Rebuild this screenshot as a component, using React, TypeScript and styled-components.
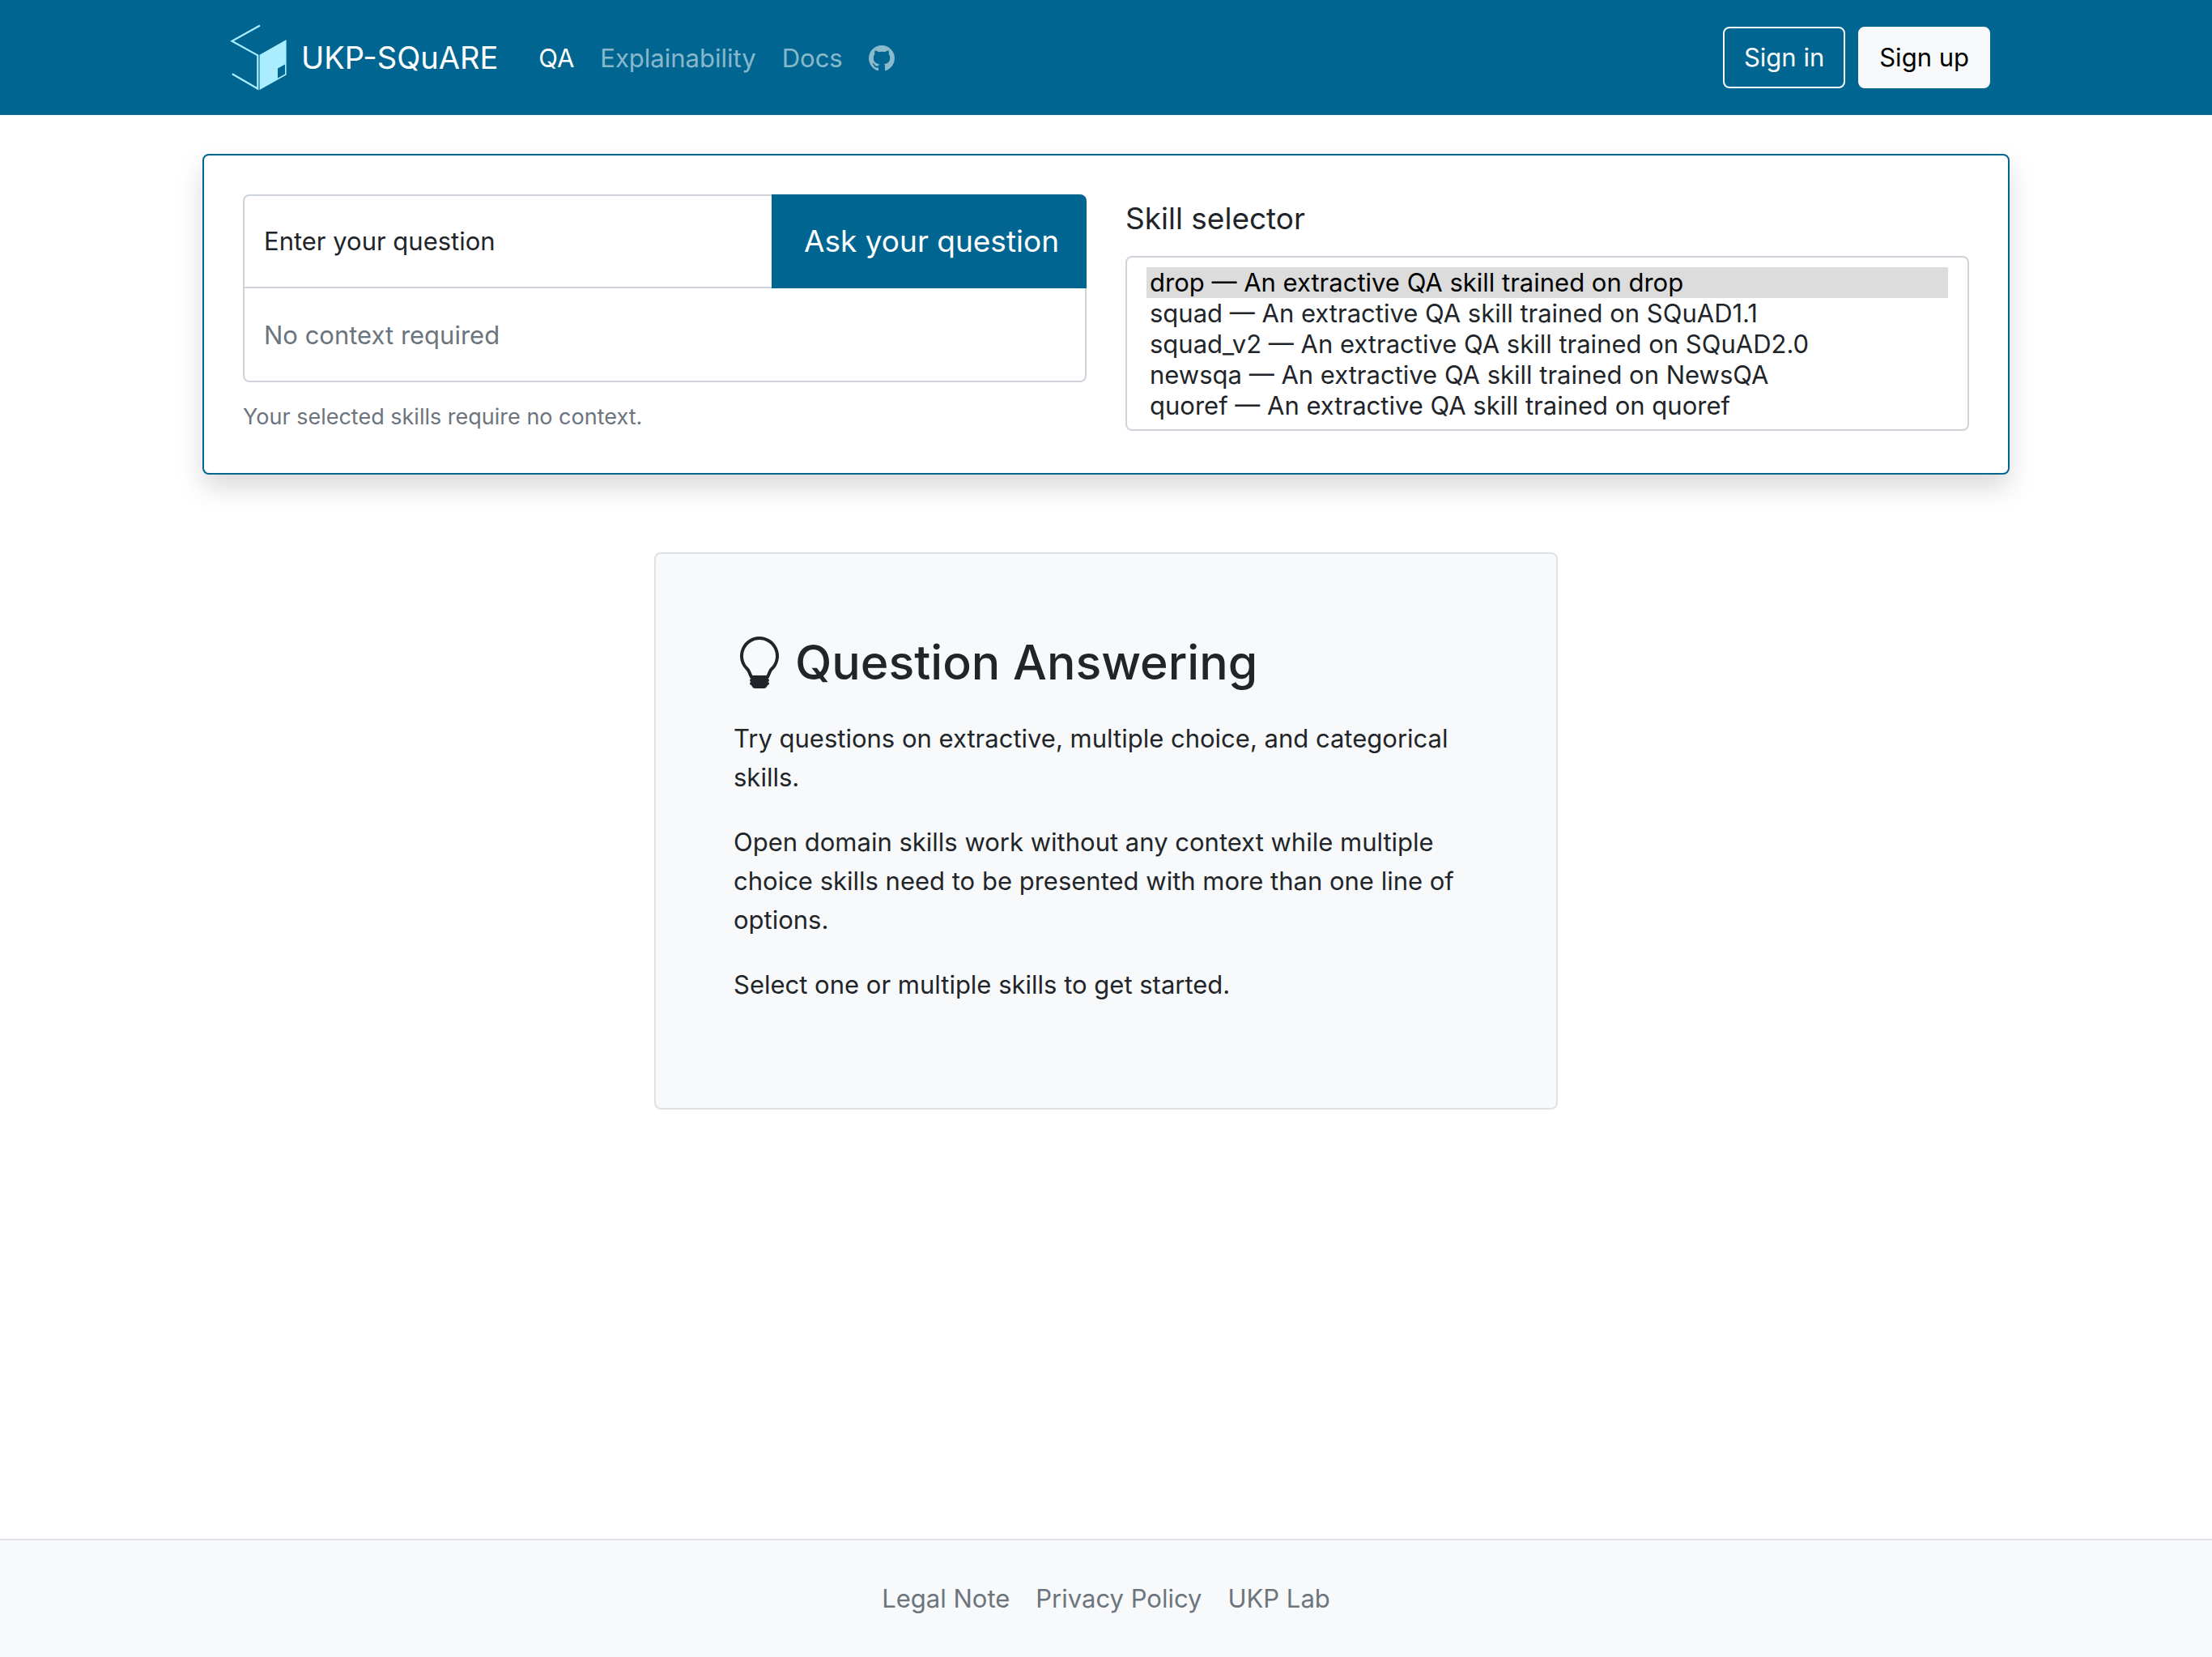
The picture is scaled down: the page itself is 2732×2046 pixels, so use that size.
import React, { useState } from "react";
import styled, { createGlobalStyle } from "styled-components";
import { BsGithub, BsLightbulb } from "react-icons/bs";

const color = {
  primary: "#006691",
  logo: "#a9edff",
  body: "#212529",
  muted: "#6c757d",
  light: "#f8f9fa",
  line: "#dee2e6",
  control: "#ced4da",
};

const GlobalStyle = createGlobalStyle`
  *, *::before, *::after { box-sizing: border-box; }
  body {
    margin: 0;
    background: #fff;
    color: ${color.body};
    font-family: Inter, "Liberation Sans", sans-serif;
    font-size: 31px;
    line-height: 48px;
  }
  input, textarea, select, button { font: inherit; margin: 0; }
`;

const Page = styled.div`
  display: flex;
  flex-direction: column;
  min-height: 100vh;
`;

const Container = styled.div`
  width: 100%;
  max-width: 2280px;
  margin: 0 auto;
  padding: 0 24px;
`;

const Header = styled.header`
  background: ${color.primary};
  padding: 16px 0;
`;

const NavBar = styled.nav`
  display: flex;
  align-items: center;
  padding: 0 24px;
`;

const Brand = styled.a`
  display: flex;
  align-items: center;
  gap: 6px;
  margin-right: 34px;
  color: #fff;
  font-size: 38px;
  line-height: 60px;
  text-decoration: none;
  white-space: nowrap;
`;

const NavList = styled.ul`
  display: flex;
  flex: 1;
  align-items: center;
  margin: 0;
  padding: 0;
  list-style: none;
`;

const NavLink = styled.a<{ $active?: boolean }>`
  display: flex;
  align-items: center;
  height: 80px;
  padding: 2px 16px 0;
  color: ${(p) => (p.$active ? "#fff" : "rgba(255, 255, 255, 0.55)")};
  text-decoration: none;
`;

const Actions = styled.div`
  display: flex;
  gap: 16px;
`;

const NavButton = styled.button<{ $filled?: boolean }>`
  height: 76px;
  padding: 0 24px;
  border: 2px solid ${color.light};
  border-radius: 8px;
  background: ${(p) => (p.$filled ? color.light : "transparent")};
  color: ${(p) => (p.$filled ? "#000" : color.light)};
  white-space: nowrap;
  cursor: pointer;
`;

const Main = styled.main`
  flex: 1;
  padding: 48px 0;
`;

const QueryCard = styled.form`
  display: grid;
  grid-template-columns: 1fr 1fr;
  gap: 48px;
  padding: 48px;
  border: 2px solid ${color.primary};
  border-radius: 8px;
  background: #fff;
  box-shadow: 0 16px 32px rgba(0, 0, 0, 0.15);
`;

const Column = styled.div`
  display: flex;
  flex-direction: column;
  min-width: 0;
`;

const InputGroup = styled.div`
  display: flex;
  height: 116px;
`;

const QuestionInput = styled.input`
  flex: 1;
  min-width: 0;
  padding: 0 24px;
  border: 2px solid ${color.control};
  border-right: 0;
  border-radius: 8px 0 0 0;
  background: #fff;
  color: ${color.body};
  outline: none;
  &::placeholder { color: ${color.body}; opacity: 1; }
`;

const AskButton = styled.button`
  padding: 0 34px 0 40px;
  border: 0;
  border-radius: 0 8px 0 0;
  background: ${color.primary};
  color: #fff;
  font-size: 37px;
  white-space: nowrap;
  cursor: pointer;
`;

const ContextArea = styled.textarea`
  display: block;
  width: 100%;
  height: 116px;
  padding: 34px 24px 32px;
  border: 2px solid ${color.control};
  border-top: 0;
  border-radius: 0 0 8px 8px;
  background: #fff;
  resize: none;
  overflow: hidden;
  &::placeholder { color: ${color.muted}; opacity: 1; }
`;

const HelpText = styled.small`
  margin-top: 22px;
  color: ${color.muted};
  font-size: 27px;
  line-height: 42px;
`;

const SelectLabel = styled.label`
  margin-bottom: 16px;
  font-size: 37px;
  line-height: 60px;
`;

const SkillSelect = styled.select`
  width: 100%;
  height: 216px;
  padding: 12px 24px;
  border: 2px solid ${color.control};
  border-radius: 8px;
  background: #fff;
  color: ${color.body};
  appearance: none;
  overflow: hidden;
  outline: none;
`;

const SkillOption = styled.option`
  height: 38px;
  min-height: 38px;
  padding: 0 4px;
  line-height: 38px;
  &:checked {
    background: linear-gradient(#dcdcdc, #dcdcdc);
    color: #000;
  }
`;

const Intro = styled.section`
  width: 50%;
  margin: 96px auto 0;
  padding: 96px;
  border: 2px solid ${color.line};
  border-radius: 8px;
  background: ${color.light};
`;

const IntroTitle = styled.h1`
  display: flex;
  align-items: center;
  gap: 12px;
  margin: 0 0 32px;
  font-size: 59px;
  font-weight: 500;
  line-height: 76px;
`;

const Paragraph = styled.p`
  margin: 0 0 32px;
`;

const Footer = styled.footer`
  display: flex;
  justify-content: center;
  gap: 32px;
  padding: 48px 0;
  border-top: 2px solid ${color.line};
  background: ${color.light};
`;

const FooterLink = styled.a`
  color: ${color.muted};
  text-decoration: none;
`;

function Logo() {
  return (
    <svg width="92" height="110" viewBox="0 0 92 110" fill="none" aria-hidden="true">
      <path
        d="M47 15.5L12.5 34.8L44.3 52.3V93.5L12.8 75.3"
        stroke={color.logo}
        strokeWidth="2.2"
      />
      <path
        fillRule="evenodd"
        fill={color.logo}
        d="M46.6 51.8L79.6 33V76.5L46.6 95ZM69 68.6L78 63.6V75.6L69 80.6Z"
      />
    </svg>
  );
}

const skills = [
  { name: "drop", source: "drop" },
  { name: "squad", source: "SQuAD1.1" },
  { name: "squad_v2", source: "SQuAD2.0" },
  { name: "newsqa", source: "NewsQA" },
  { name: "quoref", source: "quoref" },
];

export default function App() {
  const [selected, setSelected] = useState<string[]>(["drop"]);

  return (
    <Page>
      <GlobalStyle />
      <Header>
        <Container>
          <NavBar>
            <Brand href="#">
              <Logo />
              UKP-SQuARE
            </Brand>
            <NavList>
              <li><NavLink href="#qa" $active>QA</NavLink></li>
              <li><NavLink href="#explainability">Explainability</NavLink></li>
              <li><NavLink href="#docs">Docs</NavLink></li>
              <li>
                <NavLink href="#github" aria-label="GitHub">
                  <BsGithub size={32} />
                </NavLink>
              </li>
            </NavList>
            <Actions>
              <NavButton type="button">Sign in</NavButton>
              <NavButton type="button" $filled>Sign up</NavButton>
            </Actions>
          </NavBar>
        </Container>
      </Header>

      <Main>
        <Container>
          <QueryCard onSubmit={(e) => e.preventDefault()}>
            <Column>
              <InputGroup>
                <QuestionInput type="text" aria-label="Enter your question" placeholder="Enter your question" />
                <AskButton type="submit">Ask your question</AskButton>
              </InputGroup>
              <ContextArea
                aria-label="Context"
                aria-describedby="context-help"
                placeholder="No context required"
                disabled
              />
              <HelpText id="context-help">Your selected skills require no context.</HelpText>
            </Column>
            <Column>
              <SelectLabel htmlFor="skills">Skill selector</SelectLabel>
              <SkillSelect
                id="skills"
                multiple
                size={5}
                value={selected}
                onChange={(e) => setSelected(Array.from(e.target.selectedOptions, (o) => o.value))}
              >
                {skills.map((s) => (
                  <SkillOption key={s.name} value={s.name}>
                    {`${s.name} — An extractive QA skill trained on ${s.source}`}
                  </SkillOption>
                ))}
              </SkillSelect>
            </Column>
          </QueryCard>
        </Container>
        <Container>
          <Intro>
            <IntroTitle>
              <BsLightbulb size={64} />
              Question Answering
            </IntroTitle>
            <Paragraph>
              Try questions on extractive, multiple choice, and categorical skills.
            </Paragraph>
            <Paragraph>
              Open domain skills work without any context while multiple choice skills need to be
              presented with more than one line of options.
            </Paragraph>
            <Paragraph>Select one or multiple skills to get started.</Paragraph>
          </Intro>
        </Container>
      </Main>

      <Footer>
        <FooterLink href="#legal">Legal Note</FooterLink>
        <FooterLink href="#privacy">Privacy Policy</FooterLink>
        <FooterLink href="#lab">UKP Lab</FooterLink>
      </Footer>
    </Page>
  );
}
